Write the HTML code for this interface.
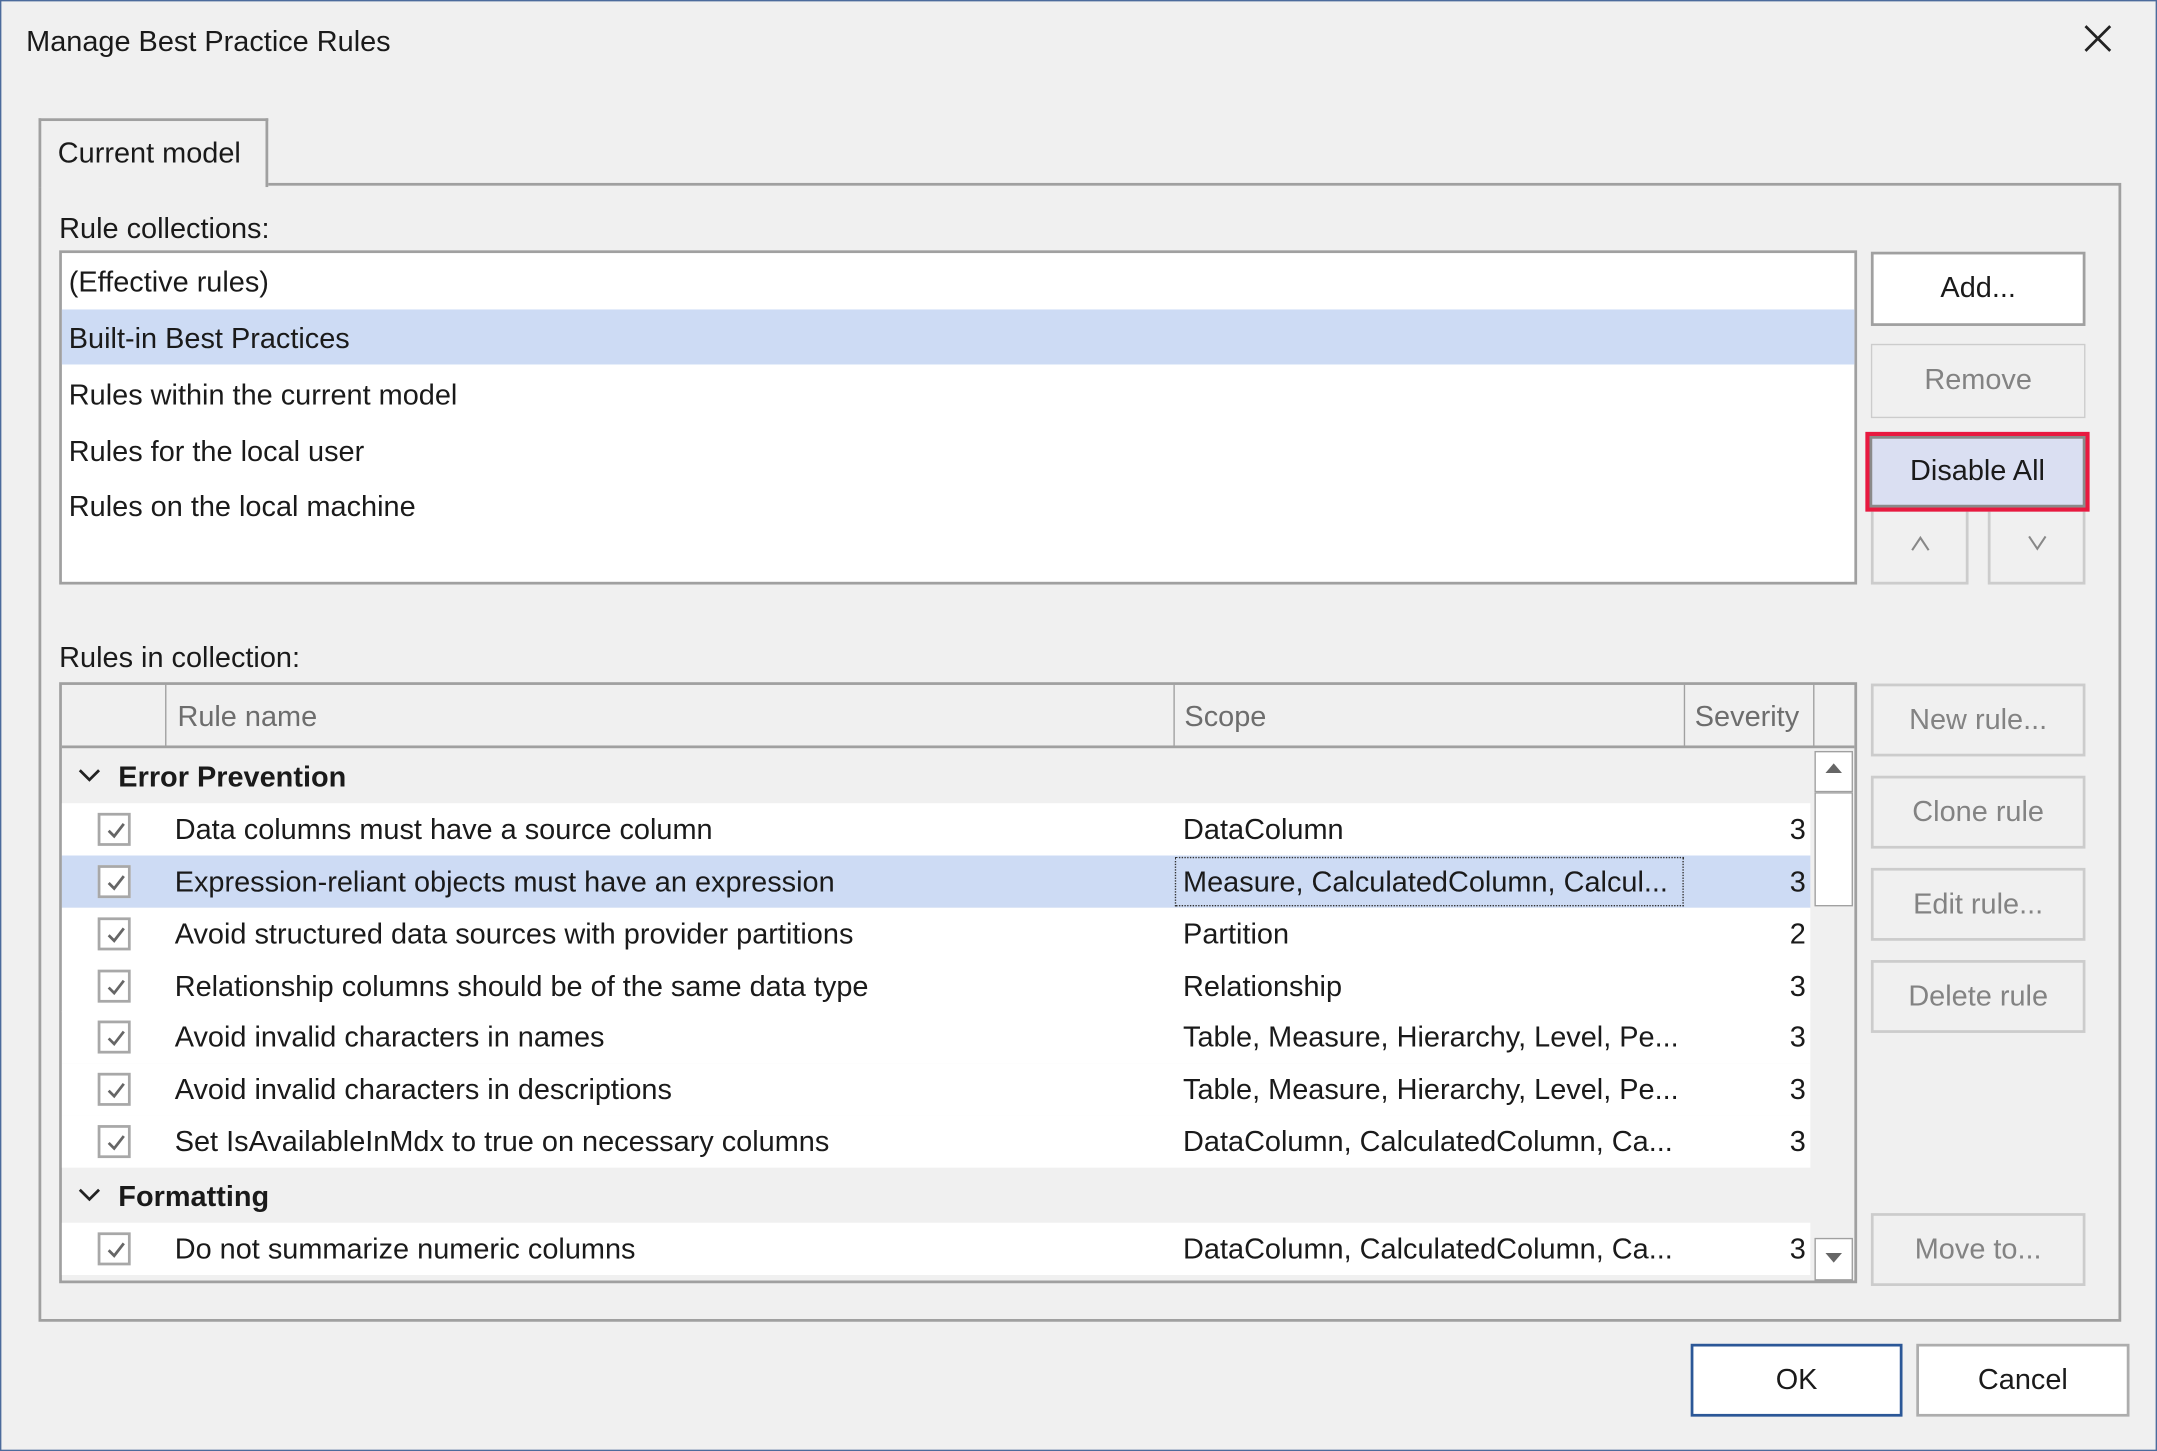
<!DOCTYPE html>
<html><head><meta charset="utf-8"><style>
html,body{margin:0;padding:0;width:2157px;height:1451px;overflow:hidden;background:#f0f0f0}
#w{position:absolute;left:0;top:0;width:1568px;height:1055px;transform:scale(1.37564,1.3754);transform-origin:0 0;background:#f0f0f0;font-family:"Liberation Sans",sans-serif;font-size:21px;color:#1a1a1a}
.a{position:absolute;box-sizing:border-box}
.t{position:absolute;white-space:nowrap;line-height:24px;margin-top:1px}
.btn{position:absolute;box-sizing:border-box;border:1px solid #cccccc;background:#f0f0f0;color:#838383;text-align:center;display:flex;align-items:center;justify-content:center}
.row{position:absolute;left:45px;width:1271px;height:38px;background:#fff}
.cb{position:absolute;left:71px;width:24px;height:24px;box-sizing:border-box;border:2px solid #a8a8a8;background:#fff}
.cb svg{position:absolute;left:3px;top:3px}
</style></head><body><div id="w">
<div class="a" style="left:0;top:0;width:1568px;height:1055px;border:1px solid #4c6b9c"></div>
<div class="t" style="left:19px;top:18px">Manage Best Practice Rules</div>
<svg class="a" style="left:1514px;top:17px" width="22" height="22"><path d="M2 2L20 20M20 2L2 20" stroke="#222" stroke-width="2"/></svg>
<div class="a" style="left:28px;top:133px;width:1514px;height:828px;border:2px solid #a0a0a0"></div>
<div class="a" style="left:28px;top:86px;width:167px;height:50px;border:2px solid #a0a0a0;border-bottom:none;background:#f0f0f0"></div>
<div class="t" style="left:42px;top:99px">Current model</div>
<div class="t" style="left:43px;top:154px">Rule collections:</div>
<div class="a" style="left:43px;top:182px;width:1307px;height:243px;border:2px solid #a0a0a0;background:#fff"></div>
<div class="a" style="left:45px;top:225px;width:1303px;height:40px;background:#cddbf4"></div>
<div class="t" style="left:50px;top:193px">(Effective rules)</div>
<div class="t" style="left:50px;top:234px">Built-in Best Practices</div>
<div class="t" style="left:50px;top:275px">Rules within the current model</div>
<div class="t" style="left:50px;top:316px">Rules for the local user</div>
<div class="t" style="left:50px;top:356px">Rules on the local machine</div>
<div class="btn" style="left:1360px;top:183px;width:156px;height:54px;background:#fff;border:2px solid #a0a0a0;color:#1a1a1a">Add...</div>
<div class="btn" style="left:1360px;top:250px;width:156px;height:54px">Remove</div>
<div class="btn" style="left:1360px;top:365px;width:71px;height:60px;border-width:2px"><svg width="14" height="12"><path d="M1 11L7 2L13 11" stroke="#888" fill="none" stroke-width="1.5"/></svg></div>
<div class="btn" style="left:1445px;top:365px;width:71px;height:60px;border-width:2px"><svg width="14" height="12"><path d="M1 1L7 10L13 1" stroke="#888" fill="none" stroke-width="1.5"/></svg></div>
<div class="btn" style="left:1356px;top:314px;width:163px;height:58px;border:3px solid #e8193f;background:#dadff2;color:#1a1a1a;box-shadow:inset 0 0 0 2px #8a8a8a">Disable All</div>
<div class="t" style="left:43px;top:466px">Rules in collection:</div>
<div class="a" style="left:43px;top:496px;width:1307px;height:437px;border:2px solid #a0a0a0;background:#f0f0f0"></div>
<div class="a" style="left:45px;top:542px;width:1303px;height:2px;background:#a0a0a0"></div>
<div class="a" style="left:120px;top:498px;width:1px;height:44px;background:#a0a0a0"></div>
<div class="a" style="left:853px;top:498px;width:1px;height:44px;background:#a0a0a0"></div>
<div class="a" style="left:1224px;top:498px;width:1px;height:44px;background:#a0a0a0"></div>
<div class="a" style="left:1318px;top:498px;width:1px;height:44px;background:#a0a0a0"></div>
<div class="t" style="left:129px;top:509px;color:#6d6d6d">Rule name</div>
<div class="t" style="left:861px;top:509px;color:#6d6d6d">Scope</div>
<div class="t" style="left:1232px;top:509px;color:#6d6d6d">Severity</div>
<svg class="a" style="left:57px;top:559px" width="16" height="10"><path d="M1 1L8 8L15 1" stroke="#222" fill="none" stroke-width="2"/></svg>
<div class="t" style="left:86px;top:553px;font-weight:bold">Error Prevention</div>
<svg class="a" style="left:57px;top:864px" width="16" height="10"><path d="M1 1L8 8L15 1" stroke="#222" fill="none" stroke-width="2"/></svg>
<div class="t" style="left:86px;top:858px;font-weight:bold">Formatting</div>

<div class="row" style="top:584px"></div>
<div class="row" style="top:622px;background:#cddbf4"></div>
<div class="row" style="top:660px"></div>
<div class="row" style="top:698px"></div>
<div class="row" style="top:735px"></div>
<div class="row" style="top:773px"></div>
<div class="row" style="top:811px"></div>
<div class="row" style="top:889px"></div>
<div class="a" style="left:854px;top:623px;width:370px;height:36px;border:1px dotted #333"></div>

<div class="cb" style="top:591px"><svg width="16" height="16"><path d="M3 8L7 12L14 3" stroke="#666" fill="none" stroke-width="2"/></svg></div>
<div class="cb" style="top:629px"><svg width="16" height="16"><path d="M3 8L7 12L14 3" stroke="#666" fill="none" stroke-width="2"/></svg></div>
<div class="cb" style="top:667px"><svg width="16" height="16"><path d="M3 8L7 12L14 3" stroke="#666" fill="none" stroke-width="2"/></svg></div>
<div class="cb" style="top:705px"><svg width="16" height="16"><path d="M3 8L7 12L14 3" stroke="#666" fill="none" stroke-width="2"/></svg></div>
<div class="cb" style="top:742px"><svg width="16" height="16"><path d="M3 8L7 12L14 3" stroke="#666" fill="none" stroke-width="2"/></svg></div>
<div class="cb" style="top:780px"><svg width="16" height="16"><path d="M3 8L7 12L14 3" stroke="#666" fill="none" stroke-width="2"/></svg></div>
<div class="cb" style="top:818px"><svg width="16" height="16"><path d="M3 8L7 12L14 3" stroke="#666" fill="none" stroke-width="2"/></svg></div>
<div class="cb" style="top:896px"><svg width="16" height="16"><path d="M3 8L7 12L14 3" stroke="#666" fill="none" stroke-width="2"/></svg></div>

<div class="t" style="left:127px;top:591px">Data columns must have a source column</div>
<div class="t" style="left:127px;top:629px">Expression-reliant objects must have an expression</div>
<div class="t" style="left:127px;top:667px">Avoid structured data sources with provider partitions</div>
<div class="t" style="left:127px;top:705px">Relationship columns should be of the same data type</div>
<div class="t" style="left:127px;top:742px">Avoid invalid characters in names</div>
<div class="t" style="left:127px;top:780px">Avoid invalid characters in descriptions</div>
<div class="t" style="left:127px;top:818px">Set IsAvailableInMdx to true on necessary columns</div>
<div class="t" style="left:127px;top:896px">Do not summarize numeric columns</div>

<div class="t" style="left:860px;top:591px">DataColumn</div>
<div class="t" style="left:860px;top:629px">Measure, CalculatedColumn, Calcul...</div>
<div class="t" style="left:860px;top:667px">Partition</div>
<div class="t" style="left:860px;top:705px">Relationship</div>
<div class="t" style="left:860px;top:742px">Table, Measure, Hierarchy, Level, Pe...</div>
<div class="t" style="left:860px;top:780px">Table, Measure, Hierarchy, Level, Pe...</div>
<div class="t" style="left:860px;top:818px">DataColumn, CalculatedColumn, Ca...</div>
<div class="t" style="left:860px;top:896px">DataColumn, CalculatedColumn, Ca...</div>

<div class="t" style="left:1301px;top:591px">3</div>
<div class="t" style="left:1301px;top:629px">3</div>
<div class="t" style="left:1301px;top:667px">2</div>
<div class="t" style="left:1301px;top:705px">3</div>
<div class="t" style="left:1301px;top:742px">3</div>
<div class="t" style="left:1301px;top:780px">3</div>
<div class="t" style="left:1301px;top:818px">3</div>
<div class="t" style="left:1301px;top:896px">3</div>

<div class="a" style="left:1319px;top:546px;width:28px;height:30px;border:1px solid #a0a0a0;background:#fff"></div>
<svg class="a" style="left:1326px;top:553px" width="14" height="10"><path d="M1 9L7 2L13 9Z" fill="#666"/></svg>
<div class="a" style="left:1319px;top:576px;width:28px;height:83px;border:1px solid #a0a0a0;background:#fff"></div>
<div class="a" style="left:1319px;top:900px;width:28px;height:31px;border:1px solid #a0a0a0;background:#fff"></div>
<svg class="a" style="left:1326px;top:910px" width="14" height="10"><path d="M1 1L7 8L13 1Z" fill="#666"/></svg>

<div class="btn" style="left:1360px;top:497px;width:156px;height:53px;border-width:2px">New rule...</div>
<div class="btn" style="left:1360px;top:564px;width:156px;height:53px;border-width:2px">Clone rule</div>
<div class="btn" style="left:1360px;top:631px;width:156px;height:53px;border-width:2px">Edit rule...</div>
<div class="btn" style="left:1360px;top:698px;width:156px;height:53px;border-width:2px">Delete rule</div>
<div class="btn" style="left:1360px;top:882px;width:156px;height:53px;border-width:2px">Move to...</div>

<div class="btn" style="left:1229px;top:977px;width:154px;height:53px;border:2px solid #2b5797;background:#fff;color:#1a1a1a">OK</div>
<div class="btn" style="left:1393px;top:977px;width:155px;height:53px;border:2px solid #adadad;background:#fff;color:#1a1a1a">Cancel</div>
</div></body></html>
